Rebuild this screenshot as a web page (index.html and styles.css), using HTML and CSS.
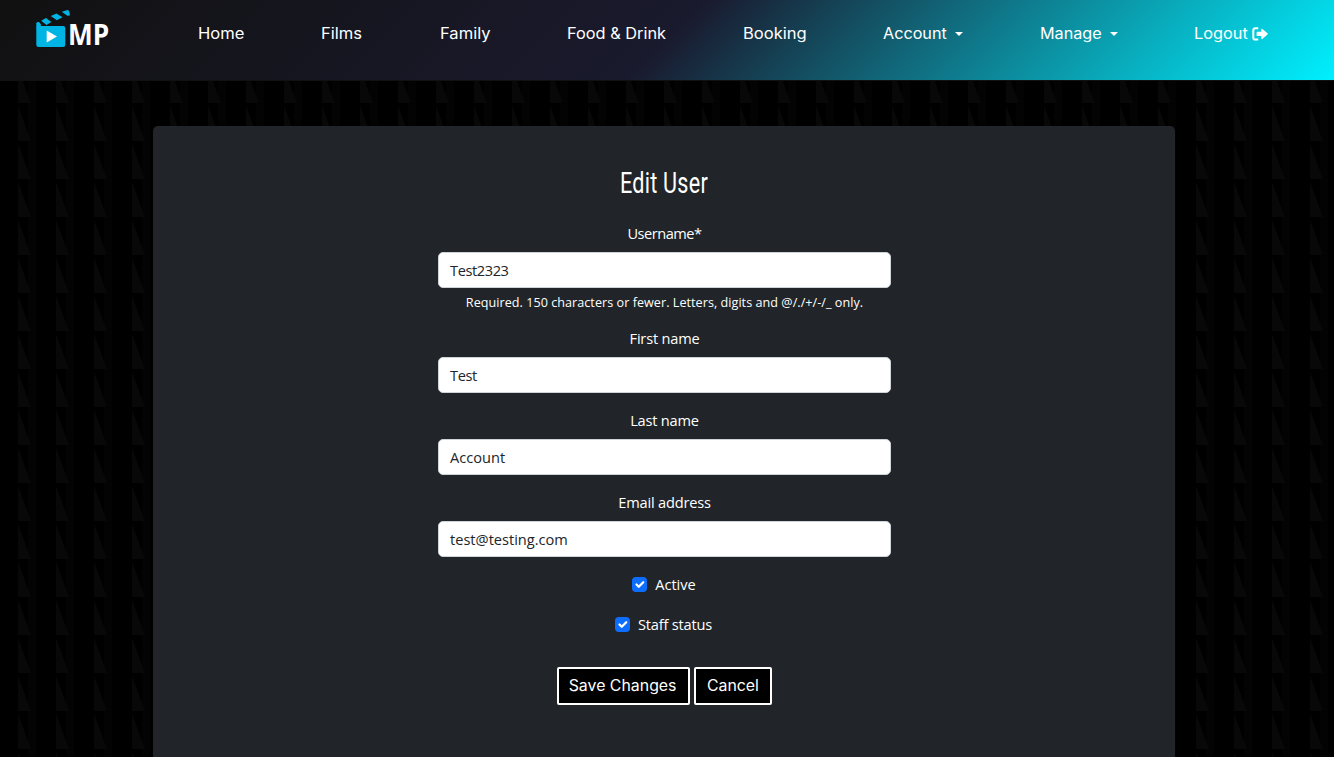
FILE: index.html
```html
<!DOCTYPE html>
<html lang="en">
<head>
<meta charset="utf-8">
<title>Edit User</title>
<link rel="stylesheet" href="styles.css">
</head>
<body>
<header class="navbar">
  <a class="brand" aria-label="MP">
    <svg class="brand-icon" width="36" height="38" viewBox="0 0 36 38">
      <g fill="#00b4e4">
        <rect x="0.3" y="16" width="29" height="21" rx="2.2"/>
        <path d="M.3 18V13.2Q1 11.5 3 12L5 14.5 4.4 17Z"/>
        <path d="M5.2 10.7L10 8 15.3 12 10.5 14.9Z"/>
        <path d="M14.8 6L20.5 3.4 26.5 7.3 20.8 10.2Z"/>
        <path d="M25.8 1.8L31.5 0Q33.5 0 33.9 5.4L31.4 5.8Z"/>
      </g>
      <path fill="#fff" d="M10.7 20.6L21 26.6 10.7 32.6Z"/>
    </svg>
    <span class="brand-text">MP</span>
  </a>
  <nav class="links">
    <a class="link home"><span>Home</span></a>
    <a class="link films"><span>Films</span></a>
    <a class="link family"><span>Family</span></a>
    <a class="link food"><span>Food &amp; Drink</span></a>
    <a class="link booking"><span>Booking</span></a>
    <a class="link account"><span>Account</span><i class="caret"></i></a>
    <a class="link manage"><span>Manage</span><i class="caret"></i></a>
    <a class="link logout"><span>Logout</span><svg class="exit" width="16" height="14" viewBox="0 0 16 14"><path d="M6.3 1.2H3.5Q1.3 1.2 1.3 3.4V10.4Q1.3 12.6 3.5 12.6H6.3" fill="none" stroke="#fff" stroke-width="2"/><path fill="#fff" d="M5.3 4.7H9.3V2.3Q9.4 1.2 10.4 1.9L15.5 6.3Q16 6.9 15.5 7.5L10.4 11.9Q9.4 12.6 9.3 11.5V9.1H5.3Q4.6 9.1 4.6 8.4V5.4Q4.6 4.7 5.3 4.7Z"/></svg></a>
  </nav>
</header>
<main class="card">
  <h1 class="title">Edit User</h1>
  <form class="form">
    <div class="field first">
      <label class="label username">Username*</label>
      <div class="input short">Test2323</div>
      <div class="help">Required. 150 characters or fewer. Letters, digits and @/./+/-/_ only.</div>
    </div>
    <div class="field">
      <label class="label">First name</label>
      <div class="input short">Test</div>
    </div>
    <div class="field">
      <label class="label">Last name</label>
      <div class="input">Account</div>
    </div>
    <div class="field">
      <label class="label">Email address</label>
      <div class="input">test@testing.com</div>
    </div>
    <div class="check"><svg class="box" viewBox="0 0 20 20"><path d="M6 10l3 3 6-6"/></svg><span>Active</span></div>
    <div class="check staff"><svg class="box" viewBox="0 0 20 20"><path d="M6 10l3 3 6-6"/></svg><span>Staff status</span></div>
    <div class="actions">
      <button type="button" class="btn save"><span>Save Changes</span></button>
      <button type="button" class="btn cancel"><span>Cancel</span></button>
    </div>
  </form>
</main>
</body>
</html>
```
FILE: styles.css
```css
* { box-sizing: border-box; }
body {
  margin: 0;
  height: 757px;
  color: #fff;
  font-family: "Open Sans", "Noto Sans", sans-serif;
  background: #000 url("data:image/svg+xml,%3Csvg xmlns='http://www.w3.org/2000/svg' width='38' height='38'%3E%3Cpath d='M28 0h8v38h-8z' fill='%23030303'/%3E%3Cpath d='M18 3L30.8 38H18z' fill='%23080808'/%3E%3C/svg%3E") 0 27px;
}
.navbar {
  display: flex;
  height: 80px;
  padding: 10px 66px 0 36px;
  background: linear-gradient(135deg, #111 0%, #1a1a2e 50%, #00f0ff 100%);
  box-shadow: 0 1px 0 #111;
}
.brand { display: flex; width: 162px; }
.brand-text {
  margin: 6px 0 0 -4px;
  font: 700 28.5px/36px "Open Sans", sans-serif;
  transform: scaleX(.92);
  transform-origin: left;
}
.links {
  display: flex;
  flex: 1;
  justify-content: space-between;
  height: 48px;
}
.link {
  display: flex;
  align-items: center;
  height: 48px;
  font: 400 15.2px/48px Inter, sans-serif;
  white-space: nowrap;
}
.link span { transform: scaleX(1.09); transform-origin: left; }
.home { width: 47px; }
.films { width: 42px; }
.family { width: 51px; }
.food { width: 99px; }
.booking { width: 64px; }
.account { width: 80px; }
.manage { width: 78px; }
.logout { width: 74px; }
.food span, .logout span { transform: scaleX(1.075); }
.account span, .manage span { transform: scaleX(1.065); }
.caret {
  margin-left: auto;
  border: 4px solid transparent;
  border-top-color: #fff;
  border-bottom: 0;
}
.exit { margin-left: auto; }
.card {
  width: 1022px;
  height: 631px;
  margin: 46px 0 0 153px;
  padding-top: 39px;
  border-radius: 5px 5px 0 0;
  background: #212529;
}
.title {
  margin: 0 0 21px;
  text-align: center;
  font: 400 29px/36px Roboto, sans-serif;
  letter-spacing: .3px;
  transform: scaleX(.745);
}
.form { width: 453px; margin: 0 0 0 285px; text-align: center; }
.field { margin-bottom: 16px; }
.first { margin-bottom: 11px; }
.label {
  display: block;
  height: 30px;
  font-size: 14.6px;
  line-height: 23px;
  letter-spacing: -.2px;
}
.username { letter-spacing: -.5px; }
.input {
  height: 36px;
  padding: 0 11px;
  border: 1px solid #ced4da;
  border-radius: 5px;
  background: #fff;
  color: #212529;
  font-size: 14.6px;
  line-height: 35px;
  text-align: left;
}
.short { letter-spacing: -.4px; }
.help {
  height: 24px;
  margin-top: 4px;
  font-size: 12.6px;
  line-height: 21px;
  letter-spacing: .04px;
  white-space: nowrap;
}
.check {
  display: flex;
  justify-content: center;
  align-items: center;
  gap: 8px;
  height: 22px;
  margin-bottom: 18px;
  padding-right: 1px;
  font-size: 14.6px;
  line-height: 20px;
}
.check span { padding-bottom: 1px; }
.staff { padding-right: 2px; letter-spacing: -.2px; }
.box {
  width: 15px;
  height: 15px;
  border-radius: 4px;
  background: #0d6efd;
  fill: none;
  stroke: #fff;
  stroke-width: 3;
  stroke-linecap: round;
  stroke-linejoin: round;
}
.actions { display: flex; justify-content: center; gap: 4px; padding: 14px 1px 0 0; }
.btn {
  height: 38px;
  padding: 0;
  border: 2px solid #fff;
  border-radius: 2px;
  background: #000;
  color: #fff;
  font: 400 15.2px/34px Inter, sans-serif;
}
.btn span { display: inline-block; transform: scaleX(1.045); }
.save { width: 133px; }
.cancel { width: 78px; }
```
